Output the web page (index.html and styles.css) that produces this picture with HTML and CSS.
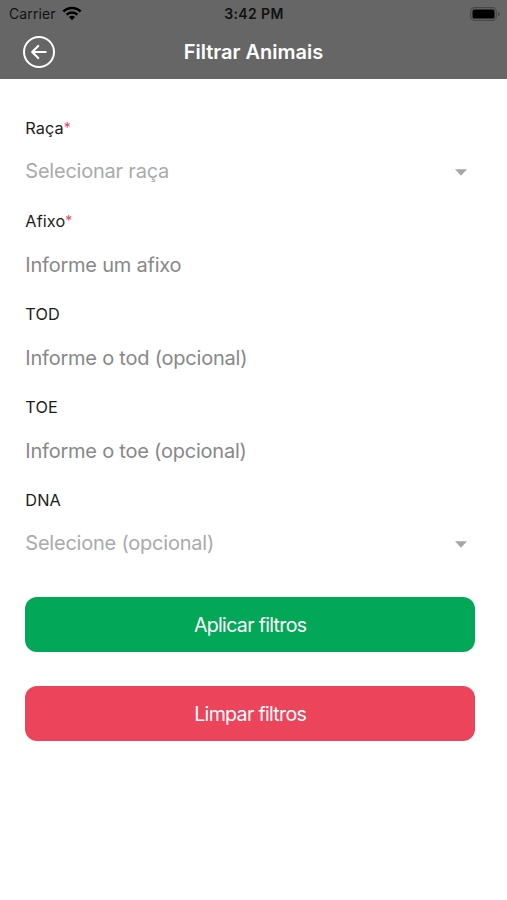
FILE: index.html
```html
<!DOCTYPE html>
<html lang="pt-BR">
<head>
<meta charset="utf-8">
<title>Filtrar Animais</title>
<link rel="stylesheet" href="styles.css">
</head>
<body>
<header class="top">
  <div class="status">
    <div class="carrier"><span>Carrier</span>
      <svg class="wifi" width="20" height="15" viewBox="0 0 20 15" fill="none" stroke="#000" stroke-width="2.5"><path d="M1.4 5.5a12.3 12.3 0 0 1 17.2 0M4.5 8.7a7.9 7.9 0 0 1 11 0"/><path d="M10 14.2l-3-3.1a4.3 4.3 0 0 1 6 0z" fill="#000" stroke="none"/></svg>
    </div>
    <span class="time">3:42 PM</span>
    <svg class="battery" width="31" height="14" viewBox="0 0 31 14"><rect x=".7" y=".7" width="25.6" height="12.6" rx="3.8" fill="none" stroke="#484848" stroke-width="1.2"/><rect x="2.5" y="2.5" width="22" height="9" rx="1.5" fill="#000"/><path d="M28 5v4q1.8-.6 1.8-2T28 5z" fill="#444"/></svg>
  </div>
  <div class="nav">
    <svg class="back" width="34" height="34" viewBox="0 0 34 34" fill="none" stroke="#fff" stroke-width="2"><circle cx="17" cy="17" r="15"/><path d="M23.7 17H10.3M16.2 11L10.2 17l6 6" stroke-width="2.2" stroke-linecap="round" stroke-linejoin="round"/></svg>
    <h1 class="title">Filtrar Animais</h1>
  </div>
</header>
<main class="form">
  <div class="field"><div class="label"><span>Raça</span><span class="req">*</span></div>
    <div class="value select"><span>Selecionar raça</span><svg class="caret" width="12" height="7" viewBox="0 0 12 7"><path d="M0 .3h12L6 6.7z" fill="#a6a6a6"/></svg></div></div>
  <div class="field"><div class="label"><span>Afixo</span><span class="req">*</span></div>
    <div class="value"><span>Informe um afixo</span></div></div>
  <div class="field"><div class="label"><span>TOD</span></div>
    <div class="value"><span>Informe o tod (opcional)</span></div></div>
  <div class="field"><div class="label"><span>TOE</span></div>
    <div class="value"><span>Informe o toe (opcional)</span></div></div>
  <div class="field"><div class="label"><span>DNA</span></div>
    <div class="value select"><span>Selecione (opcional)</span><svg class="caret" width="12" height="7" viewBox="0 0 12 7"><path d="M0 .3h12L6 6.7z" fill="#a6a6a6"/></svg></div></div>
  <div class="actions">
    <div class="btn apply"><span>Aplicar filtros</span></div>
    <div class="btn clear"><span>Limpar filtros</span></div>
  </div>
</main>
</body>
</html>
```
FILE: styles.css
```css
* { box-sizing: border-box; }
body { margin: 0; min-height: 900px; background: #fff; font-family: Inter, "Liberation Sans", sans-serif; color: #1c1c1c; }
.top { height: 79px; background: #666; }
.status { height: 27px; display: grid; grid-template-columns: 1fr auto 1fr; align-items: center; padding: 0 6px 0 9px; color: #111; }
.carrier { display: flex; align-items: center; gap: 6px; font-size: 14px; line-height: 27px; letter-spacing: 0.1px; }
.time { font-size: 14px; font-weight: 600; letter-spacing: 0.4px; margin-right: 2px; }
.battery { justify-self: end; }
.nav { height: 50px; display: grid; grid-template-columns: 1fr auto 1fr; align-items: center; padding: 0 22px; }
.title { margin: 0; font-size: 20px; line-height: 50px; font-weight: 600; color: #fff; }
.form { padding: 39px 32px 0 25.3px; }
.field { height: 93px; }
.label { height: 20px; font-size: 16.3px; line-height: 20px; letter-spacing: 0.1px; display: flex; }
.req { color: #ec445b; font-size: 14px; line-height: 19px; }
.value { margin-top: 21px; height: 26px; font-size: 20px; line-height: 26px; letter-spacing: -0.22px; color: #888; display: flex; align-items: center; justify-content: space-between; padding-right: 8.5px; }
.select { margin-top: 20px; color: #aaa; }
.caret { margin-top: 2px; }
.actions { display: grid; gap: 34px; padding-top: 14px; }
.btn { height: 55px; border-radius: 12px; display: flex; align-items: center; justify-content: center; color: #fff; font-size: 19.6px; letter-spacing: -0.7px; }
.apply { background: #02a757; }
.clear { background: #ec445b; }
```
